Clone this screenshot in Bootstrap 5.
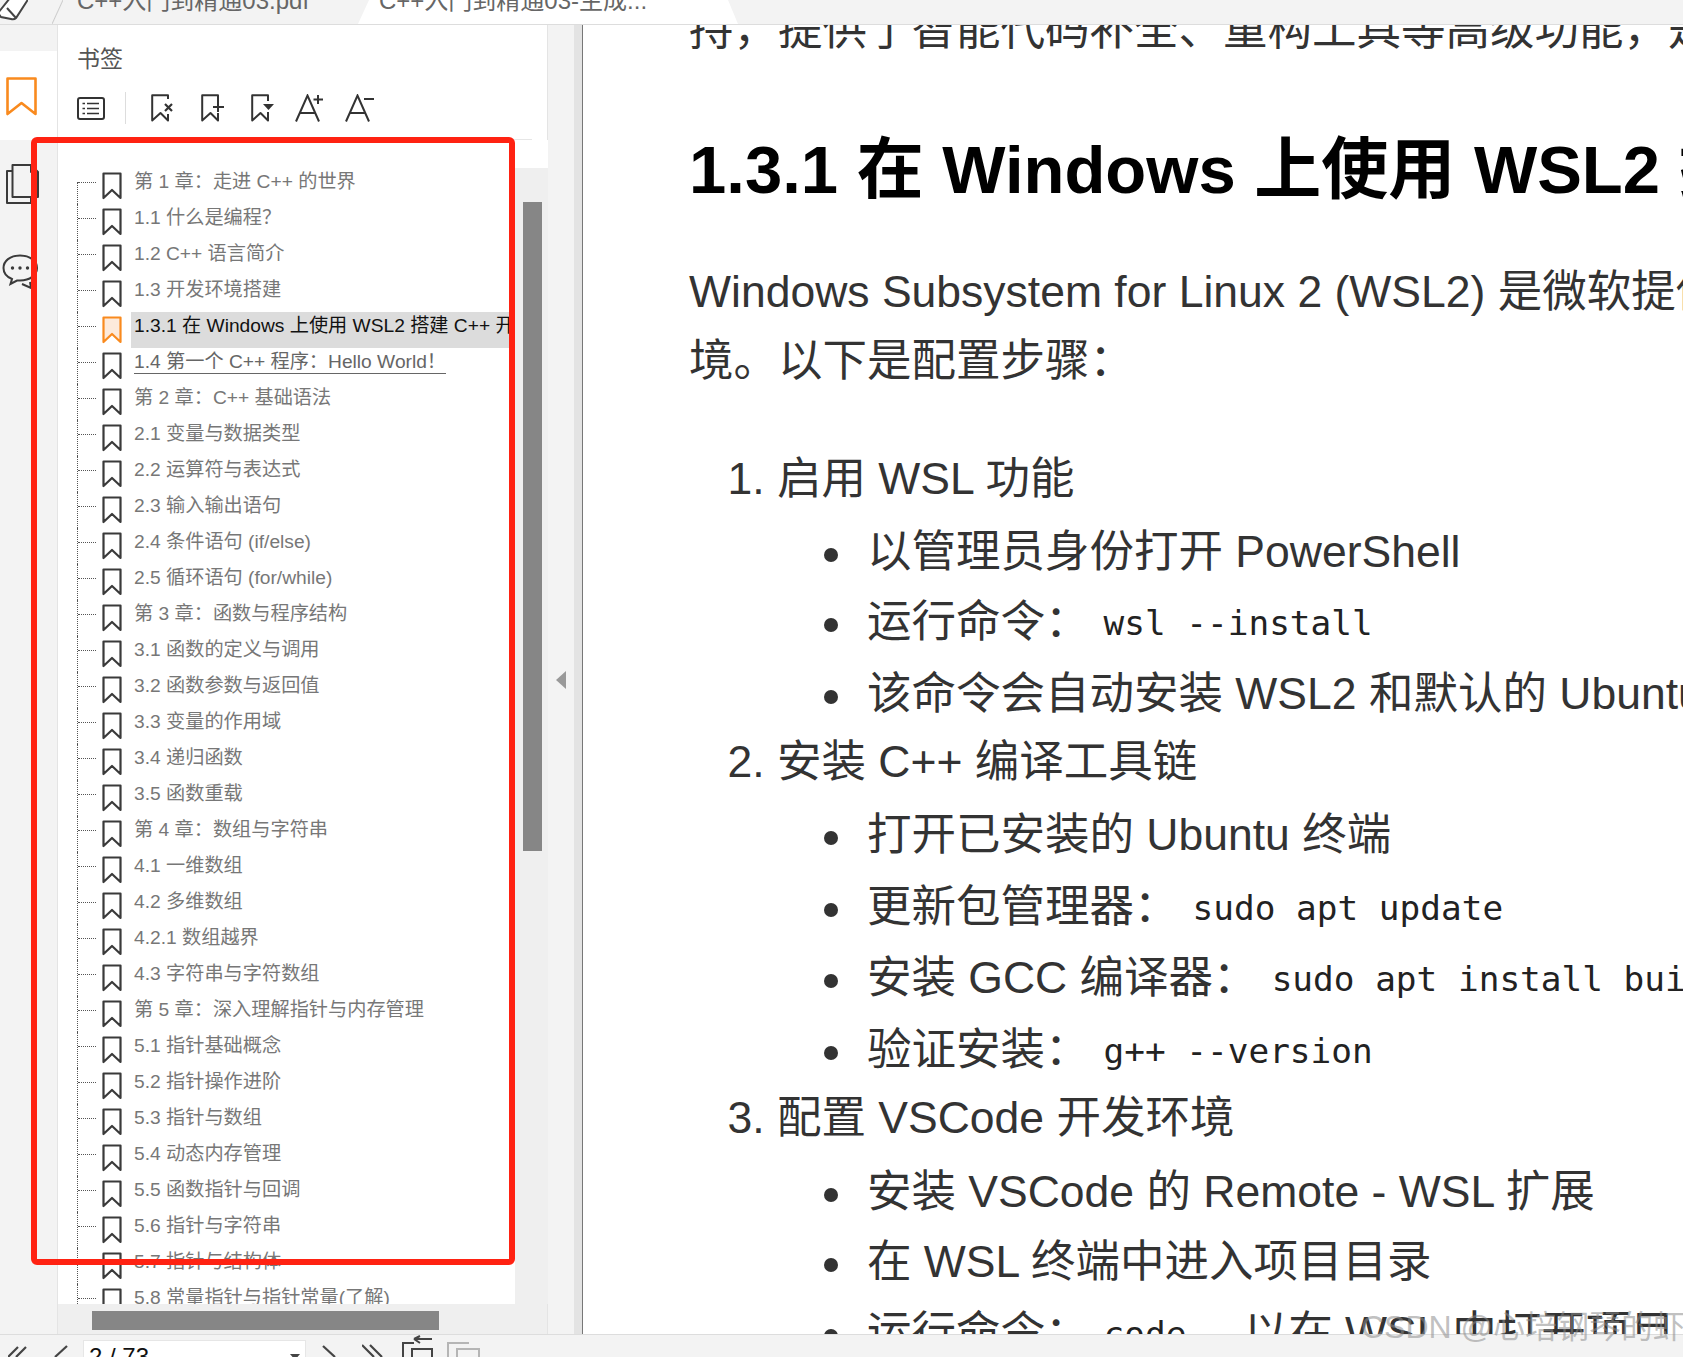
<!DOCTYPE html>
<html lang="zh-CN">
<head>
<meta charset="utf-8">
<title>C++入门到精通03</title>
<link href="https://cdn.jsdelivr.net/npm/bootstrap@5.3.0/dist/css/bootstrap.min.css" rel="stylesheet">
<style>
html,body{height:1357px;overflow:hidden}
body{position:relative;font-family:"Liberation Sans","Noto Sans CJK SC",sans-serif;background:#f3f3f3;color:#333}
.tabbar{height:25px;background:#f3f3f3;border-bottom:1px solid #ddd;overflow:hidden;flex:none}
.eraser{width:28px;height:24px;flex:none}
.tabdoc{height:24px;font-size:24px;line-height:24px;color:#666;white-space:nowrap;flex:none}
.tabdoc span{display:block;margin-top:-11px}
.tab-one{width:331px;padding-left:49px;background:linear-gradient(to bottom right,transparent calc(50% - 1px),#ccc,transparent calc(50% + 1px)) 24px 0/11px 24px no-repeat}
.tab-two{width:380px;margin-left:-1px;background:#fff;padding-left:21px;clip-path:polygon(11px 0,calc(100% - 10px) 0,100% 100%,0 100%)}
.tab-two span{display:flex;justify-content:space-between;padding-right:26px}
.tabx{width:16px;height:12px;margin-top:-2px;flex:none}
.workspace{height:1309px;flex:none}
.rail{width:58px;flex:none;background:#f3f3f3}
.railtab{margin-top:26px;height:89px;background:#fff;padding:26px 0 0 6px}
.railico{display:block;margin-left:6px}
.ico-pages{margin-top:24px}
.ico-talk{margin-top:50px;margin-left:2px}
.sidepanel{width:491px;flex:none;background:#fff;border-right:1px solid #e4e4e4;border-left:1px solid #e4e4e4;margin-left:-1px}
.panelhead{height:115px;flex:none;padding-left:19px;margin-right:15px;border-bottom:1px solid #e6e6e6}
.paneltitle{font-size:23px;line-height:28px;color:#555;padding-top:20px;height:67px}
.tools{height:32px}
.tools svg{display:block;flex:none}
.toolsep{width:1px;height:32px;background:#ddd;margin:0 25px 0 20px}
.t2{margin-left:27px}.t3{margin-left:26px}.t4{margin-left:20px}.t5{margin-left:20px}
.treewrap{height:1164px;flex:none}
.treeview{width:457px;flex:none;padding-top:28px;overflow:hidden}
.node{height:36px;padding-left:19px;flex:none}
.stub{width:25px;height:36px;flex:none;border-left:1px dotted #555}
.stub i{display:block;width:18px;margin-top:14px;border-top:1px dotted #555}
.first .stub{height:22px;margin-top:14px}
.first .stub i{margin-top:0}
.bk{width:20px;height:28px;margin-top:4px;flex:none;display:block}
.lbl{margin-left:9px;padding-left:3px;height:36px;flex:1 1 auto;min-width:0;overflow:hidden;white-space:nowrap;font-size:19.2px;color:#777}
.lbl span{display:inline-block;line-height:22px;margin-top:3px}
.on .lbl{background:#dcdcdc;color:#111}
.hov .lbl span{border-bottom:1px solid #666;color:#666}
.vtrack{width:33px;flex:none;background:#fff}
.vbar{margin-top:28px;height:1136px;background:#efefef;padding:34px 6px 0 8px}
.vthumb{height:649px;background:#868686}
.htrack{height:30px;flex:none;background:#efefef;padding:7px 0 0 34px}
.hthumb{width:347px;height:19px;background:#868686}
.splitter{width:26px;flex:none;background:#f3f3f3}
.splitarrow{width:0;height:0;border-style:solid;border-width:9px 10px 9px 0;border-color:transparent #999 transparent transparent}
.gutter{width:8px;flex:none;background:#e3e3e3}
.docline{width:1px;flex:none;background:#777}
.pageview{flex:1 1 auto;min-width:0;background:#fff;overflow:hidden;white-space:nowrap;padding-left:106px;font-size:44.5px}
.pageview p{line-height:69px;margin:0}
.cutline{margin-top:-30px!important;line-height:70px!important}
.pageview h1{font-family:"Liberation Sans","Noto Sans CJK SC",sans-serif;font-weight:700;font-size:67px;line-height:80px;color:#000;margin:65px 0 47px}
.steps{margin:49px 0 0;padding:0 0 0 88px;list-style:decimal}
.steps>li,.subs>li{line-height:70px}
.subs{margin:0;padding:0 0 0 90px;list-style:none}
.subs>li::before{content:"";display:inline-block;width:14px;height:14px;border-radius:50%;background:#333;margin-left:-43px;margin-right:29px;vertical-align:middle}
.cmd{font-family:"DejaVu Sans Mono","Liberation Mono",monospace;font-size:34.4px;color:#222;line-height:1;padding-left:14px;vertical-align:2px}
.aftercmd{padding-left:16px}
.up2{margin-top:-2px}
.dn1{margin-top:1px}.dn2{margin-top:2px}.dn3{margin-top:3px}.dn4{margin-top:4px}
.statusbar{height:23px;flex:none;background:#f3f3f3;border-top:1px solid #ddd;overflow:hidden}
.statusbar svg{display:block;flex:none}
.pagebox{width:223px;height:30px;margin:5px 16px 0 13px;background:#fff;border:1px solid #e6e6e6;font-size:24px;line-height:32px;color:#111;padding-left:5px;flex:none}
.caret-dn{width:0;height:0;border-style:solid;border-width:6px 5px 0;border-color:#444 transparent transparent;margin:13px 5px 0 0}
.copyoff{margin-left:13px}
.redframe{position:absolute;left:31px;top:137px;width:484px;height:1128px;border:6px solid #ff2212;border-radius:6px;pointer-events:none}
.watermark{position:absolute;left:1361px;top:1308px;font-size:32px;line-height:38px;color:rgba(140,140,140,.55);white-space:nowrap;width:322px;overflow:hidden}
</style>
</head>
<body class="d-flex flex-column">
<svg width="0" height="0" class="d-none">
<symbol id="bk" viewBox="0 0 20 28"><path d="M1.5 1.5H18.5V26L10 18L1.5 26Z" fill="none" stroke="#3a3a3a" stroke-width="2.2" stroke-linejoin="round"/></symbol>
<symbol id="bkon" viewBox="0 0 20 28"><path d="M1.5 1.5H18.5V26L10 18L1.5 26Z" fill="#fdeadb" stroke="#f98a1e" stroke-width="2.2" stroke-linejoin="round"/></symbol>
</svg>

<div class="tabbar d-flex">
  <svg class="eraser" viewBox="0 0 28 24"><path d="M-2 13L10 -2H29L16 18Q14 20 11 19L1 17Z" fill="#fff" stroke="#444" stroke-width="2"/><path d="M7 8L16 18" stroke="#444" stroke-width="2"/></svg>
  <div class="tabdoc tab-one"><span>C++入门到精通03.pdf</span></div>
  <div class="tabdoc tab-two"><span>C++入门到精通03-生成...<svg class="tabx" viewBox="0 0 16 12"><path d="M2 -1L13 10M13 -1L2 10" stroke="#222" stroke-width="2.6"/></svg></span></div>
</div>

<div class="workspace d-flex">
  <div class="rail">
    <div class="railtab"><svg width="31" height="39" viewBox="0 0 31 39" class="d-block"><path d="M1.5 1.5H29.5V37L15.5 26L1.500 37Z" fill="none" stroke="#f98a1e" stroke-width="2.6" stroke-linejoin="round"/></svg></div>
    <svg class="railico ico-pages" width="33" height="40" viewBox="0 0 33 40"><path d="M6.500 1H25L32 8V33H6.500ZM25 1V8H32M6.500 7H1V39H25V33" fill="none" stroke="#3a3a3a" stroke-width="2" stroke-linejoin="round"/></svg>
    <svg class="railico ico-talk" width="38" height="35" viewBox="0 0 38 35"><path d="M18 1.500C8 1.500 1.500 7 1.500 14C1.500 19 5 23 10 25L8.500 30L15 26.500H18C28 26.500 35 21 35 14C35 7 28 1.500 18 1.500Z" fill="#f3f3f3" stroke="#3a3a3a" stroke-width="2"/><circle cx="10.500" cy="14" r="1.700" fill="#3a3a3a"/><circle cx="18" cy="14" r="1.700" fill="#3a3a3a"/><circle cx="25.500" cy="14" r="1.700" fill="#3a3a3a"/><path d="M20 30L29 34L28 28" fill="none" stroke="#3a3a3a" stroke-width="2"/></svg>
  </div>

  <div class="sidepanel d-flex flex-column">
    <div class="panelhead">
      <div class="paneltitle">书签</div>
      <div class="tools d-flex align-items-center">
        <svg width="28" height="23" viewBox="0 0 28 23"><rect x="1" y="1" width="26" height="21" rx="2" fill="none" stroke="#333" stroke-width="2"/><path d="M10 6.500H22M10 11.500H22M10 16.500H22M5.500 6.500H8M5.500 11.500H8M5.500 16.500H8" stroke="#333" stroke-width="1.700"/></svg>
        <div class="toolsep"></div>
        <svg width="23" height="28" viewBox="0 0 23 28"><path d="M17 5V1.200H1.200V26.500L9.500 19L17 26.500V20" fill="none" stroke="#333" stroke-width="2" stroke-linejoin="round"/><path d="M14 10L21 17M21 10L14 17" stroke="#333" stroke-width="2.200"/></svg>
        <svg class="t2" width="24" height="28" viewBox="0 0 24 28"><path d="M17 8V1.200H1.200V26.500L9.500 19L17 26.500V19" fill="none" stroke="#333" stroke-width="2" stroke-linejoin="round"/><path d="M17 8V18M12 13H23" stroke="#333" stroke-width="2"/></svg>
        <svg class="t3" width="24" height="28" viewBox="0 0 24 28"><path d="M17 7V1.200H1.200V26.500L9.500 19L17 26.500V18" fill="none" stroke="#333" stroke-width="2" stroke-linejoin="round"/><path d="M12 10H23L17.500 16Z" fill="#333"/></svg>
        <svg class="t4" width="30" height="28" viewBox="0 0 30 28"><path d="M1 27.500L12.500 1.500L24 27.500M5 19H20" fill="none" stroke="#333" stroke-width="2"/><path d="M23 1V10M18.500 5.500H28" stroke="#333" stroke-width="2"/></svg>
        <svg class="t5" width="30" height="28" viewBox="0 0 30 28"><path d="M1 27.500L12.500 1.500L24 27.500M5 19H20" fill="none" stroke="#333" stroke-width="2"/><path d="M19 5H29" stroke="#333" stroke-width="2"/></svg>
      </div>
    </div>
    <div class="treewrap d-flex">
      <ul class="treeview list-unstyled mb-0">
        <li class="node d-flex first"><div class="stub"><i></i></div><svg class="bk"><use href="#bk"/></svg><div class="lbl"><span>第 1 章：走进 C++ 的世界</span></div></li>
        <li class="node d-flex"><div class="stub"><i></i></div><svg class="bk"><use href="#bk"/></svg><div class="lbl"><span>1.1 什么是编程？</span></div></li>
        <li class="node d-flex"><div class="stub"><i></i></div><svg class="bk"><use href="#bk"/></svg><div class="lbl"><span>1.2 C++ 语言简介</span></div></li>
        <li class="node d-flex"><div class="stub"><i></i></div><svg class="bk"><use href="#bk"/></svg><div class="lbl"><span>1.3 开发环境搭建</span></div></li>
        <li class="node d-flex on"><div class="stub"><i></i></div><svg class="bk"><use href="#bkon"/></svg><div class="lbl"><span>1.3.1 在 Windows 上使用 WSL2 搭建 C++ 开发环境</span></div></li>
        <li class="node d-flex hov"><div class="stub"><i></i></div><svg class="bk"><use href="#bk"/></svg><div class="lbl"><span>1.4 第一个 C++ 程序：Hello World！</span></div></li>
        <li class="node d-flex"><div class="stub"><i></i></div><svg class="bk"><use href="#bk"/></svg><div class="lbl"><span>第 2 章：C++ 基础语法</span></div></li>
        <li class="node d-flex"><div class="stub"><i></i></div><svg class="bk"><use href="#bk"/></svg><div class="lbl"><span>2.1 变量与数据类型</span></div></li>
        <li class="node d-flex"><div class="stub"><i></i></div><svg class="bk"><use href="#bk"/></svg><div class="lbl"><span>2.2 运算符与表达式</span></div></li>
        <li class="node d-flex"><div class="stub"><i></i></div><svg class="bk"><use href="#bk"/></svg><div class="lbl"><span>2.3 输入输出语句</span></div></li>
        <li class="node d-flex"><div class="stub"><i></i></div><svg class="bk"><use href="#bk"/></svg><div class="lbl"><span>2.4 条件语句 (if/else)</span></div></li>
        <li class="node d-flex"><div class="stub"><i></i></div><svg class="bk"><use href="#bk"/></svg><div class="lbl"><span>2.5 循环语句 (for/while)</span></div></li>
        <li class="node d-flex"><div class="stub"><i></i></div><svg class="bk"><use href="#bk"/></svg><div class="lbl"><span>第 3 章：函数与程序结构</span></div></li>
        <li class="node d-flex"><div class="stub"><i></i></div><svg class="bk"><use href="#bk"/></svg><div class="lbl"><span>3.1 函数的定义与调用</span></div></li>
        <li class="node d-flex"><div class="stub"><i></i></div><svg class="bk"><use href="#bk"/></svg><div class="lbl"><span>3.2 函数参数与返回值</span></div></li>
        <li class="node d-flex"><div class="stub"><i></i></div><svg class="bk"><use href="#bk"/></svg><div class="lbl"><span>3.3 变量的作用域</span></div></li>
        <li class="node d-flex"><div class="stub"><i></i></div><svg class="bk"><use href="#bk"/></svg><div class="lbl"><span>3.4 递归函数</span></div></li>
        <li class="node d-flex"><div class="stub"><i></i></div><svg class="bk"><use href="#bk"/></svg><div class="lbl"><span>3.5 函数重载</span></div></li>
        <li class="node d-flex"><div class="stub"><i></i></div><svg class="bk"><use href="#bk"/></svg><div class="lbl"><span>第 4 章：数组与字符串</span></div></li>
        <li class="node d-flex"><div class="stub"><i></i></div><svg class="bk"><use href="#bk"/></svg><div class="lbl"><span>4.1 一维数组</span></div></li>
        <li class="node d-flex"><div class="stub"><i></i></div><svg class="bk"><use href="#bk"/></svg><div class="lbl"><span>4.2 多维数组</span></div></li>
        <li class="node d-flex"><div class="stub"><i></i></div><svg class="bk"><use href="#bk"/></svg><div class="lbl"><span>4.2.1 数组越界</span></div></li>
        <li class="node d-flex"><div class="stub"><i></i></div><svg class="bk"><use href="#bk"/></svg><div class="lbl"><span>4.3 字符串与字符数组</span></div></li>
        <li class="node d-flex"><div class="stub"><i></i></div><svg class="bk"><use href="#bk"/></svg><div class="lbl"><span>第 5 章：深入理解指针与内存管理</span></div></li>
        <li class="node d-flex"><div class="stub"><i></i></div><svg class="bk"><use href="#bk"/></svg><div class="lbl"><span>5.1 指针基础概念</span></div></li>
        <li class="node d-flex"><div class="stub"><i></i></div><svg class="bk"><use href="#bk"/></svg><div class="lbl"><span>5.2 指针操作进阶</span></div></li>
        <li class="node d-flex"><div class="stub"><i></i></div><svg class="bk"><use href="#bk"/></svg><div class="lbl"><span>5.3 指针与数组</span></div></li>
        <li class="node d-flex"><div class="stub"><i></i></div><svg class="bk"><use href="#bk"/></svg><div class="lbl"><span>5.4 动态内存管理</span></div></li>
        <li class="node d-flex"><div class="stub"><i></i></div><svg class="bk"><use href="#bk"/></svg><div class="lbl"><span>5.5 函数指针与回调</span></div></li>
        <li class="node d-flex"><div class="stub"><i></i></div><svg class="bk"><use href="#bk"/></svg><div class="lbl"><span>5.6 指针与字符串</span></div></li>
        <li class="node d-flex"><div class="stub"><i></i></div><svg class="bk"><use href="#bk"/></svg><div class="lbl"><span>5.7 指针与结构体</span></div></li>
        <li class="node d-flex"><div class="stub"><i></i></div><svg class="bk"><use href="#bk"/></svg><div class="lbl"><span>5.8 常量指针与指针常量(了解)</span></div></li>
      </ul>
      <div class="vtrack"><div class="vbar"><div class="vthumb"></div></div></div>
    </div>
    <div class="htrack"><div class="hthumb"></div></div>
  </div>

  <div class="splitter d-flex align-items-center justify-content-center"><div class="splitarrow"></div></div>
  <div class="gutter"></div>
  <div class="docline"></div>

  <div class="pageview">
    <p class="cutline">持，提供了智能代码补全、重构工具等高级功能，是</p>
    <h1>1.3.1 在 Windows 上使用 WSL2 搭建 C++ 开发环境</h1>
    <p>Windows Subsystem for Linux 2 (WSL2) 是微软提供的 Linux 子系统环</p>
    <p>境。以下是配置步骤：</p>
    <ol class="steps">
      <li>启用 WSL 功能
        <ul class="subs">
          <li class="dn3">以管理员身份打开 PowerShell</li>
          <li>运行命令：<code class="cmd">wsl --install</code></li>
          <li class="dn2">该命令会自动安装 WSL2 和默认的 Ubuntu 发行版</li>
        </ul>
      </li>
      <li class="up2">安装 C++ 编译工具链
        <ul class="subs">
          <li class="dn3">打开已安装的 Ubuntu 终端</li>
          <li class="dn2">更新包管理器：<code class="cmd">sudo apt update</code></li>
          <li class="dn1">安装 GCC 编译器：<code class="cmd">sudo apt install build-essential</code></li>
          <li class="dn2">验证安装：<code class="cmd">g++ --version</code></li>
        </ul>
      </li>
      <li class="up2">配置 VSCode 开发环境
        <ul class="subs">
          <li class="dn4">安装 VSCode 的 Remote - WSL 扩展</li>
          <li>在 WSL 终端中进入项目目录</li>
          <li class="dn1">运行命令：<code class="cmd">code .</code><span class="aftercmd">以在 WSL 中打开项目</span></li>
        </ul>
      </li>
    </ol>
  </div>
</div>

<div class="statusbar d-flex">
  <svg class="ms-2" width="22" height="23" viewBox="0 0 22 23"><path d="M0 22L10 12M8 22L18 12" stroke="#444" stroke-width="2.200"/></svg>
  <svg class="ms-4" width="16" height="23" viewBox="0 0 16 23"><path d="M1 22L13 11" stroke="#444" stroke-width="2.200"/></svg>
  <div class="pagebox d-flex justify-content-between"><span>2 / 73</span><i class="caret-dn"></i></div>
  <svg width="16" height="23" viewBox="0 0 16 23"><path d="M1 11L13 22" stroke="#444" stroke-width="2.200"/></svg>
  <svg class="ms-4" width="24" height="23" viewBox="0 0 24 23"><path d="M0 10L12 22M8 10L20 22" stroke="#444" stroke-width="2.200"/></svg>
  <svg class="ms-3" width="32" height="23" viewBox="0 0 32 23"><path d="M1 24V8H12M30 24V14H10V24M12 4H30M12 4L18 1M12 4L18 8" fill="none" stroke="#444" stroke-width="2"/></svg>
  <svg class="copyoff" width="34" height="23" viewBox="0 0 34 23"><path d="M1 24V8H22M10 24V14H32V24" fill="none" stroke="#b5b5b5" stroke-width="2"/></svg>
</div>

<div class="redframe"></div>
<div class="watermark">CSDN @心培钢琴的虾工</div>
</body>
</html>
